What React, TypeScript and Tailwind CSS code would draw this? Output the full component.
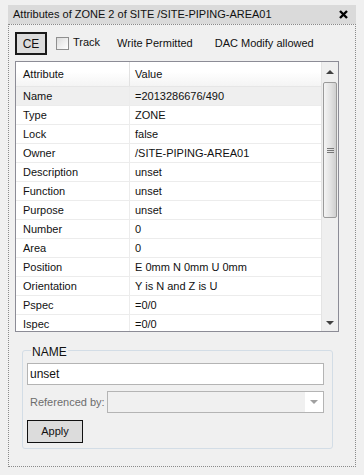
const ROWS: [string, string][] = [
  ["Name", "=2013286676/490"],
  ["Type", "ZONE"],
  ["Lock", "false"],
  ["Owner", "/SITE-PIPING-AREA01"],
  ["Description", "unset"],
  ["Function", "unset"],
  ["Purpose", "unset"],
  ["Number", "0"],
  ["Area", "0"],
  ["Position", "E 0mm N 0mm U 0mm"],
  ["Orientation", "Y is N and Z is U"],
  ["Pspec", "=0/0"],
  ["Ispec", "=0/0"],
];

function Scrollbar() {
  return (
    <div className="flex w-[17px] flex-col bg-[#efefef] border-l border-[#e4e4e4]">
      <div className="flex h-[19px] items-center justify-center">
        <div className="h-0 w-0 border-x-[4px] border-b-[4px] border-x-transparent border-b-[#404040]" />
      </div>
      <div className="mx-[1px] mt-[1px] flex h-[136px] items-center justify-center rounded-[2px] border border-[#9a9a9a] bg-[linear-gradient(to_right,#f4f4f4,#e2e2e2_55%,#cfcfcf)]">
        <div className="flex flex-col gap-[1px]">
          <div className="h-[1px] w-[7px] bg-[#777]" />
          <div className="h-[1px] w-[7px] bg-[#777]" />
          <div className="h-[1px] w-[7px] bg-[#777]" />
        </div>
      </div>
      <div className="flex-1" />
      <div className="flex h-[17px] items-center justify-center">
        <div className="h-0 w-0 border-x-[4px] border-t-[4px] border-x-transparent border-t-[#404040]" />
      </div>
    </div>
  );
}

export default function App() {
  return (
    <div className="h-[475px] w-[364px] bg-[#f0f0f0] px-[8px] pt-[5px] font-['Liberation_Sans',Arial,sans-serif] text-[11px] text-[#111]">
      {/* title bar */}
      <div className="flex h-[19px] items-center justify-between bg-[#dadada] pl-[5px] pr-[8px]">
        <span>Attributes of ZONE 2 of SITE /SITE-PIPING-AREA01</span>
        <svg width="9" height="9" viewBox="0 0 9 9">
          <path d="M1 1L8 8M8 1L1 8" stroke="#000" strokeWidth="2.4" />
        </svg>
      </div>

      {/* dock body */}
      <div className="flex h-[443px] flex-col border border-dotted border-[#8a8a8a] px-[6px] pt-[7px]">
        <div className="flex h-[23px] items-center">
          <div className="flex h-[23px] w-[32px] items-center justify-center border-2 border-[#1a1a1a] bg-[#dcdcdc] text-[12px]">CE</div>
          <div className="ml-[9px] h-[13px] w-[13px] border border-[#8f8f8f] bg-[linear-gradient(135deg,#dcdcdc,#fff)]" />
          <span className="ml-[4px] -mt-[2px]">Track</span>
          <span className="ml-[17px]">Write Permitted</span>
          <span className="ml-[22px]">DAC Modify allowed</span>
        </div>

        {/* attribute table */}
        <div className="mt-[6px] flex h-[271px] w-[324px] border border-[#8c8c96] bg-white">
          <div className="flex flex-1 flex-col overflow-hidden">
            <div className="flex h-[25px] shrink-0 items-center bg-[linear-gradient(to_bottom,#ffffff,#ffffff_40%,#f4f4f4)] border-b border-[#e6e6e6]">
              <div className="w-[114px] pl-[7px] border-r border-[#e2e2e2] h-full flex items-center">Attribute</div>
              <div className="pl-[5px]">Value</div>
            </div>
            {ROWS.map(([k, v], i) => (
              <div
                key={k}
                className={`flex h-[19px] shrink-0 items-center border-b border-[#ececec] ${i === 0 ? "bg-[#efefef]" : ""}`}
              >
                <div className="flex h-full w-[114px] items-center border-r border-[#ececec] pl-[7px]">{k}</div>
                <div className="pl-[5px]">{v}</div>
              </div>
            ))}
          </div>
          <Scrollbar />
        </div>

        {/* NAME group */}
        <div className="relative ml-[7px] mt-[18px] w-[311px] rounded-[3px] border border-[#d3dde6] pl-[4px] pr-[8px] pb-[5px] pt-[12px]">
          <span className="absolute -top-[8px] left-[8px] bg-[#f0f0f0] px-[1px] text-[12px]">NAME</span>
          <div className="flex h-[22px] items-center border border-[#b4b4b4] bg-white pl-[2px] text-[12px]">unset</div>
          <div className="mt-[6px] flex items-center">
            <span className="w-[80px] whitespace-nowrap pl-[3px] text-[#6d6d6d]">Referenced by:</span>
            <div className="flex h-[22px] flex-1 items-center justify-end border border-[#b4b4b4] bg-[#f0f0f0]">
              <div className="flex h-full w-[18px] items-center justify-center bg-white">
                <div className="h-0 w-0 border-x-[4px] border-t-[4px] border-x-transparent border-t-[#a0a0a0]" />
              </div>
            </div>
          </div>
          <div className="mt-[7px] flex h-[23px] w-[56px] items-center justify-center border border-[#111] bg-[#dcdcdc]">
            Apply
          </div>
        </div>
      </div>
    </div>
  );
}
